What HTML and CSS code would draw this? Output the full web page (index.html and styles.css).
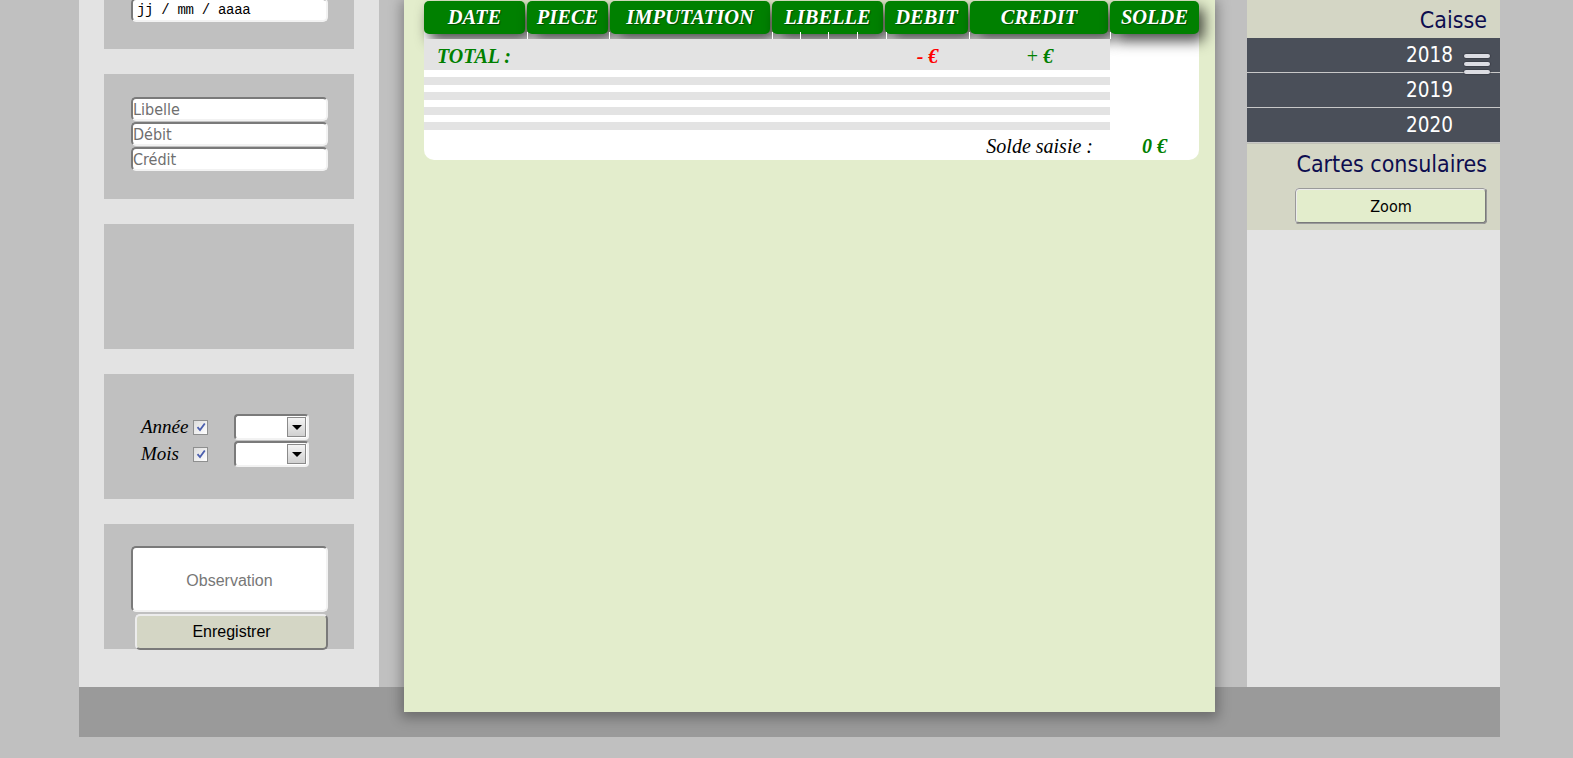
FILE: index.html
```html
<!DOCTYPE html>
<html lang="fr">
<head>
<meta charset="utf-8">
<title>Caisse</title>
<link rel="stylesheet" href="styles.css">
</head>
<body>
<div class="page">
  <div class="main">
    <aside class="left">
      <div class="box box-date">
        <input class="field mono" type="text" value="jj / mm / aaaa">
      </div>
      <div class="box box-fields">
        <input class="field" type="text" placeholder="Libelle">
        <input class="field" type="text" placeholder="Débit">
        <input class="field" type="text" placeholder="Crédit">
      </div>
      <div class="box"></div>
      <div class="box box-filter">
        <div class="filter-row">
          <span class="flabel">Année</span>
          <span class="check"><svg viewBox="0 0 12 12" width="12" height="12"><path d="M2.5 6.2 L5 9 L9.8 2.5" fill="none" stroke="#4b5fae" stroke-width="1.8"/></svg></span>
          <span class="select"><span class="sel-btn"><span class="tri"></span></span></span>
        </div>
        <div class="filter-row">
          <span class="flabel">Mois</span>
          <span class="check"><svg viewBox="0 0 12 12" width="12" height="12"><path d="M2.5 6.2 L5 9 L9.8 2.5" fill="none" stroke="#4b5fae" stroke-width="1.8"/></svg></span>
          <span class="select"><span class="sel-btn"><span class="tri"></span></span></span>
        </div>
      </div>
      <div class="box box-obs">
        <textarea class="obs" placeholder="Observation"></textarea>
        <button class="save" type="button">Enregistrer</button>
      </div>
    </aside>

    <section class="center">
      <div class="sheet">
        <div class="ledger">
          <div class="thead">
            <div class="th">DATE</div>
            <div class="th">PIECE</div>
            <div class="th">IMPUTATION</div>
            <div class="th">LIBELLE</div>
            <div class="th">DEBIT</div>
            <div class="th">CREDIT</div>
            <div class="th">SOLDE</div>
          </div>
          <div class="ticks">
            <span></span><span></span><span></span><span></span><span></span><span></span><span></span><span></span><span></span>
          </div>
          <div class="lbody">
            <div class="lrows">
              <div class="total">
                <span class="total-label">TOTAL :</span>
                <span class="total-debit">- €</span>
                <span class="total-credit"><span class="plus">+</span> €</span>
              </div>
              <div class="stripe"></div>
              <div class="stripe"></div>
              <div class="stripe"></div>
              <div class="stripe"></div>
            </div>
            <div class="lsolde"></div>
          </div>
          <div class="lfoot">
            <span class="solde-label">Solde saisie :</span>
            <span class="solde-val">0 €</span>
          </div>
        </div>
      </div>
    </section>

    <aside class="right">
      <div class="rtop">
        <div class="rtitle">Caisse</div>
        <div class="year">2018</div>
        <div class="year">2019</div>
        <div class="year">2020</div>
        <div class="rtitle rtitle2">Cartes consulaires</div>
        <div class="zoom-wrap"><button class="zoom" type="button">Zoom</button></div>
      </div>
      <div class="burger"><span></span><span></span><span></span></div>
    </aside>
  </div>
  <footer class="foot"></footer>
</div>
</body>
</html>
```

FILE: styles.css
```css
html, body {
  margin: 0;
  padding: 0;
}
body {
  background: #c0c0c0;
  overflow: hidden;
  font-family: "Liberation Sans", Arial, sans-serif;
}
.page {
  width: 1421px;
  margin-left: 79px;
}
.main {
  display: flex;
  align-items: stretch;
}

/* ---------- left column ---------- */
.left {
  width: 300px;
  box-sizing: border-box;
  background: #e3e3e3;
  padding: 0 25px 38px;
  display: flex;
  flex-direction: column;
  gap: 25px;
}
.box {
  height: 125px;
  flex: none;
  background: #c0c0c0;
  box-sizing: border-box;
}
.box-date {
  margin-top: -76px;
  padding: 74px 0 0 27px;
}
.field {
  display: block;
  width: 197px;
  height: 24px;
  box-sizing: border-box;
  margin: 0;
  padding: 0;
  background: #fff;
  border: 2px solid #f2f2f2;
  border-top-color: #7a7a7a;
  border-left-color: #7a7a7a;
  border-radius: 5px;
  font-family: "DejaVu Sans Condensed", "DejaVu Sans", sans-serif;
  font-size: 16px;
  color: #000;
  outline: none;
}
.field::placeholder {
  color: #6f6f6f;
}
.mono {
  font-family: "Liberation Mono", "Courier New", monospace;
  font-size: 14px;
  padding-left: 4px;
  letter-spacing: -0.3px;
}
.box-fields {
  padding: 23px 0 0 27px;
  display: flex;
  flex-direction: column;
  gap: 1px;
}

.box-filter {
  padding: 40px 0 0 37px;
  display: flex;
  flex-direction: column;
  gap: 1px;
}
.filter-row {
  display: flex;
  align-items: center;
  height: 26px;
}
.flabel {
  width: 52px;
  font-family: "Liberation Serif", "Times New Roman", serif;
  font-style: italic;
  font-size: 19px;
  color: #000;
}
.check {
  width: 15px;
  height: 15px;
  box-sizing: border-box;
  border: 1px solid #8e8f8f;
  background: linear-gradient(135deg, #dcdcdc, #ffffff);
  display: flex;
  align-items: center;
  justify-content: center;
}
.select {
  margin-left: 26px;
  width: 75px;
  height: 26px;
  box-sizing: border-box;
  background: #fff;
  border: 2px solid #f2f2f2;
  border-top-color: #7a7a7a;
  border-left-color: #7a7a7a;
  border-radius: 4px;
  display: flex;
  justify-content: flex-end;
  align-items: center;
  padding-right: 1px;
}
.sel-btn {
  width: 19px;
  height: 20px;
  box-sizing: border-box;
  border: 1px solid #8a8a8a;
  background: linear-gradient(#f4f4f4, #d0d0d0);
  display: flex;
  align-items: center;
  justify-content: center;
}
.tri {
  width: 0;
  height: 0;
  border-left: 5px solid transparent;
  border-right: 5px solid transparent;
  border-top: 5px solid #000;
}

.box-obs {
  padding: 22px 0 0 27px;
}
.obs {
  display: block;
  width: 197px;
  height: 66px;
  box-sizing: border-box;
  margin: 0;
  resize: none;
  background: #fff;
  border: 2px solid #f2f2f2;
  border-top-color: #7a7a7a;
  border-left-color: #7a7a7a;
  border-radius: 5px;
  font-family: "Liberation Sans", Arial, sans-serif;
  font-size: 16px;
  text-align: center;
  padding: 24px 4px 0;
  outline: none;
}
.obs::placeholder {
  color: #777;
}
.save {
  display: block;
  margin: 2px 0 0 4px;
  width: 193px;
  height: 36px;
  box-sizing: border-box;
  background: #d4d6c5;
  border: 2px solid #7a7a7a;
  border-top-color: #ececec;
  border-left-color: #ececec;
  border-radius: 5px;
  font-family: "Liberation Sans", Arial, sans-serif;
  font-size: 16px;
  color: #000;
  padding: 0;
}

/* ---------- center ---------- */
.center {
  width: 868px;
  box-sizing: border-box;
  padding: 0 32px 0 25px;
  display: flex;
  flex-direction: column;
}
.sheet {
  flex: 1;
  margin-bottom: -25px;
  position: relative;
  z-index: 1;
  background: #e3edcc;
  box-shadow: 0 3px 12px 3px rgba(0, 0, 0, 0.3);
  padding: 1px 16px 0 20px;
}
.ledger {
  width: 775px;
  background: linear-gradient(to bottom, transparent 31px, #ffffff 31px);
  border-radius: 0 0 10px 10px;
}
.thead {
  display: grid;
  grid-template-columns: 101px 81px 160px 111px 83px 138px 89px;
  column-gap: 2px;
  height: 31px;
}
.th {
  background: #008000;
  border-radius: 5px;
  box-shadow: 5px 7px 14px rgba(0, 0, 0, 0.7);
  color: #fff;
  font-family: "Liberation Serif", "Times New Roman", serif;
  font-weight: bold;
  font-style: italic;
  font-size: 20.5px;
  line-height: 33px;
  text-align: center;
  text-shadow: 1px 1px 1px rgba(0, 40, 0, 0.6);
}
.ticks {
  display: grid;
  grid-template-columns: 104px 82px 163px 28px 28px 29px 29px 83px 141px;
  height: 7px;
}
.ticks span {
  border-right: 1px solid #fff;
}
.lbody {
  display: grid;
  grid-template-columns: 686px 89px;
}
.total {
  display: grid;
  grid-template-columns: 461px 85px 140px;
  height: 31px;
  box-sizing: border-box;
  padding-top: 3px;
  align-items: center;
  background: #e3e3e3;
  font-family: "Liberation Serif", "Times New Roman", serif;
  font-weight: bold;
  font-style: italic;
  font-size: 20px;
}
.total-label {
  color: #008000;
  padding-left: 13px;
}
.total-debit {
  color: #ff0000;
  text-align: center;
}
.total-credit {
  color: #008000;
  text-align: center;
}
.plus {
  font-weight: normal;
  font-style: normal;
}
.stripe {
  height: 8px;
  margin-top: 7px;
  background: #e3e3e3;
}
.lfoot {
  display: grid;
  grid-template-columns: 686px 89px;
  height: 30px;
  box-sizing: border-box;
  padding-top: 2px;
  align-items: center;
  font-family: "Liberation Serif", "Times New Roman", serif;
  font-style: italic;
  font-size: 20px;
}
.solde-label {
  text-align: right;
  padding-right: 17px;
  color: #000;
}
.solde-val {
  text-align: center;
  color: #008000;
  font-weight: bold;
}

/* ---------- right column ---------- */
.right {
  width: 253px;
  background: #e3e3e3;
  position: relative;
  font-family: "DejaVu Sans Condensed", "DejaVu Sans", sans-serif;
}
.rtop {
  background: #d4d6c5;
  padding-bottom: 6px;
}
.rtitle {
  height: 38px;
  line-height: 40px;
  text-align: right;
  padding-right: 13px;
  font-size: 23px;
  color: #0d0d4f;
}
.rtitle2 {
  height: 41px;
  line-height: 40px;
  border-top: 1px solid #bfc0b6;
}
.year {
  height: 34px;
  line-height: 34px;
  background: #4a4f59;
  color: #fff;
  text-align: right;
  padding-right: 47px;
  font-size: 20.5px;
  border-bottom: 1px solid #c8c8c8;
}
.zoom-wrap {
  display: flex;
  justify-content: flex-end;
  padding-right: 13px;
  margin-top: 3px;
}
.zoom {
  width: 192px;
  height: 36px;
  box-sizing: border-box;
  background: #e3edcc;
  border: 2px solid #7a7a7a;
  border-top-color: #ececec;
  border-left-color: #ececec;
  outline: 1px solid #9a9a9a;
  outline-offset: -1px;
  border-radius: 4px;
  font-family: "DejaVu Sans Condensed", "DejaVu Sans", sans-serif;
  font-size: 16px;
  color: #000;
  padding: 0;
}
.burger {
  position: absolute;
  left: 217px;
  top: 54px;
  width: 26px;
  display: flex;
  flex-direction: column;
  gap: 4px;
}
.burger span {
  height: 4px;
  border-radius: 2px;
  background: #dcdde3;
  box-shadow: 0 0 1px 0.5px rgba(40, 40, 50, 0.7);
}

/* ---------- footer ---------- */
.foot {
  height: 50px;
  background: #9a9a9a;
}
```
